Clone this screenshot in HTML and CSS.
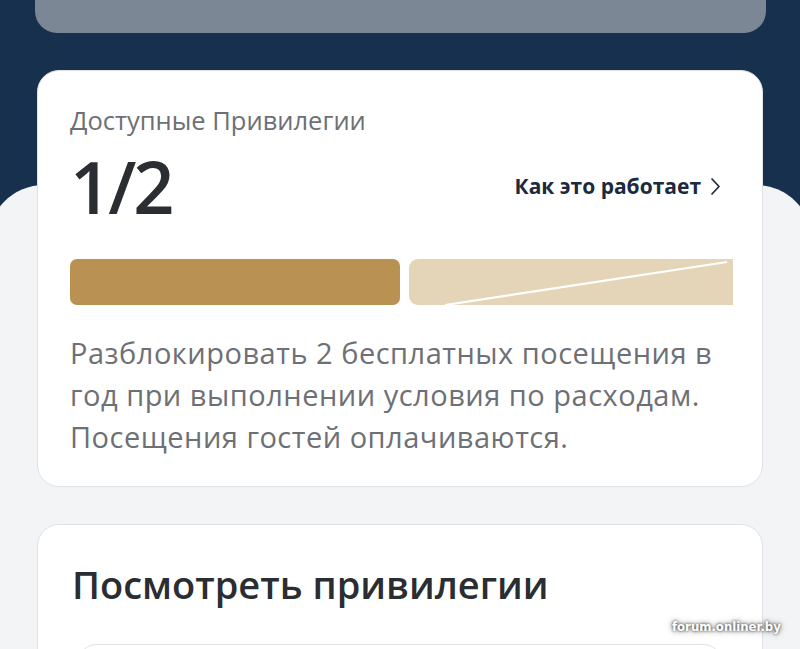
FILE: index.html
```html
<!DOCTYPE html>
<html lang="ru">
<head>
  <meta charset="UTF-8" />
  <meta name="viewport" content="width=device-width, initial-scale=1.0">
  <title>Привилегии</title>
  <link rel="stylesheet" href="styles.css">
</head>
<body>
  <div class="screen">
    <header class="top">
      <div class="account-card"><span class="account-mark"></span></div>

      <section class="card perks">
        <p class="perks-label">Доступные Привилегии</p>
        <div class="perks-row">
          <span class="perks-count">1/2</span>
          <a class="how-link" href="#">Как это работает
            <svg width="11" height="19" viewBox="0 0 11 19"><path d="M2 2l7 7.5-7 7.5" fill="none" stroke="#1b2a3e" stroke-width="1.7" stroke-linecap="round" stroke-linejoin="round"/></svg>
          </a>
        </div>
        <div class="progress">
          <div class="progress-used"></div>
          <svg class="progress-left" viewBox="0 0 324 46" preserveAspectRatio="none">
            <rect x="0" y="0" width="340" height="46" rx="9" fill="#e4d4b8"/>
            <line x1="36" y1="46" x2="318" y2="3" stroke="#fff" stroke-width="2.2"/>
          </svg>
        </div>
        <p class="perks-text">Разблокировать 2 бесплатных посещения в год при выполнении условия по расходам. Посещения гостей оплачиваются.</p>
      </section>
    </header>

    <main class="sheet">
      <section class="card browse">
        <h2 class="browse-title">Посмотреть привилегии</h2>
        <div class="browse-item"></div>
      </section>
    </main>

    <div class="watermark">forum.onliner.by</div>
  </div>
</body>
</html>
```

FILE: styles.css
```css
* { margin: 0; padding: 0; box-sizing: border-box; }

body {
  width: 800px;
  height: 649px;
  overflow: hidden;
  background: #17304d;
  font-family: 'Open Sans', 'Noto Sans', sans-serif;
}

.screen {
  position: relative;
  height: 100%;
}

/* === Tmavá hlavička === */
.top {
  display: flow-root;
  padding: 0 37px;
  height: 185px;
}

.account-card {
  height: 100px;
  margin: -67px -3px 0 -2px;
  background: #7b8794;
  border-radius: 22px;
  display: flex;
  align-items: flex-end;
}

.account-mark {
  width: 5px;
  height: 6px;
  margin: 0 0 94px 515px;
  background: #eef1f5;
  border-radius: 0 0 3px 3px;
}

.card {
  position: relative;
  z-index: 1;
  background: #fff;
  border: 1px solid #dfe1e4;
  border-radius: 22px;
}

.perks {
  margin-top: 37px;
  padding: 33px 29px 28px 32px;
}

.perks-label {
  font-size: 25.5px;
  line-height: 32px;
  color: #6d7075;
}

.perks-row {
  margin-top: 14px;
  height: 72px;
  display: flex;
  align-items: center;
  justify-content: space-between;
}

.perks-count {
  font-size: 72px;
  line-height: 72px;
  font-weight: 600;
  letter-spacing: -3px;
  color: #2a2d31;
}

.how-link {
  margin-right: 12px;
  display: flex;
  align-items: center;
  gap: 9px;
  font-size: 21px;
  font-weight: 700;
  color: #1b2a3e;
  text-decoration: none;
}

.progress {
  margin-top: 37px;
  height: 46px;
  display: grid;
  grid-template-columns: 330px 1fr;
  gap: 9px;
}

.progress-used {
  background: #b99152;
  border-radius: 7px;
}

.progress-left {
  width: 100%;
  height: 46px;
  display: block;
}

.perks-text {
  margin-top: 27px;
  font-size: 29px;
  line-height: 42px;
  letter-spacing: 0.5px;
  color: #6d7075;
}

/* === Světlá plocha === */
.sheet {
  margin: 0 -12px;
  padding: 339px 49px 0;
  min-height: 500px;
  background: #f3f4f6;
  border-radius: 56px 56px 0 0;
}

.browse {
  padding: 35px 33px 0 34px;
  height: 300px;
}

.browse-title {
  font-size: 38px;
  line-height: 48px;
  font-weight: 600;
  color: #2a2d31;
}

.browse-item {
  margin: 36px 6px 0 5px;
  height: 90px;
  border: 1px solid #dfe1e4;
  border-radius: 20px;
}

.watermark {
  position: absolute;
  z-index: 2;
  left: 672px;
  top: 619px;
  font-family: 'DejaVu Sans Condensed', 'DejaVu Sans', sans-serif;
  font-size: 13px;
  font-weight: 700;
  color: #fff;
  text-shadow: 0 0 3px rgba(0, 0, 0, 0.8), 0 0 6px rgba(0, 0, 0, 0.5);
}
```
